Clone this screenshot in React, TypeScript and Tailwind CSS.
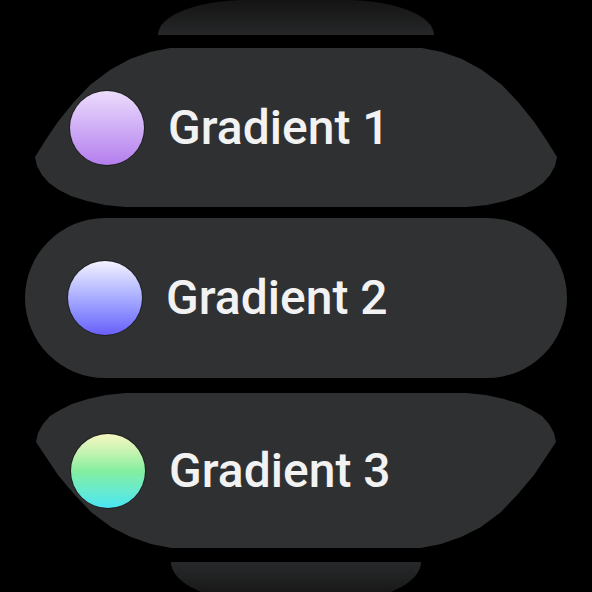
import React from "react";

function Dot({ grad }: { grad: string }) {
  return (
    <div
      className={`h-[74px] w-[74px] shrink-0 rounded-full ring-1 ring-black/40 ${grad}`}
    />
  );
}

function Label({ text }: { text: string }) {
  return (
    <span className="ml-[24px] font-['Roboto',sans-serif] text-[48px] font-medium leading-none text-[#f2f2f2]">
      {text}
    </span>
  );
}

export default function App() {
  return (
    <div className="flex h-[592px] w-[592px] flex-col items-center overflow-hidden bg-black">
      {/* top sliver */}
      <div className="h-[35px] w-[276px] shrink-0 rounded-tl-[100px_40px] rounded-tr-[100px_40px] bg-gradient-to-b from-[#141414] to-[#262728]" />

      {/* item 1 */}
      <div className="mt-[13px] flex h-[159px] w-[522px] shrink-0 items-center bg-[#2f3031] pl-[35px] [clip-path:polygon(135px_0,387px_0,407px_4px,427px_11px,447px_22px,467px_37px,484px_55px,500px_75px,512px_93px,522px_109px,520px_118px,515px_127px,508px_135px,498px_142px,486px_148px,470px_153px,452px_157px,432px_159px,90px_159px,70px_157px,52px_153px,36px_148px,24px_142px,14px_135px,7px_127px,2px_118px,0_109px,10px_93px,22px_75px,38px_55px,55px_37px,75px_22px,95px_11px,115px_4px)]">
        <Dot grad="bg-gradient-to-b from-[#ecdcfc] to-[#b47ded]" />
        <Label text="Gradient 1" />
      </div>

      {/* item 2 */}
      <div className="mt-[11px] flex h-[160px] w-[542px] shrink-0 items-center rounded-full bg-[#303132] pl-[43px]">
        <Dot grad="bg-gradient-to-b from-[#f4f2ff] to-[#6a5dfa]" />
        <Label text="Gradient 2" />
      </div>

      {/* item 3 */}
      <div className="mt-[15px] flex h-[155px] w-[520px] shrink-0 items-center bg-[#2f3031] pl-[35px] [clip-path:polygon(90px_0,430px_0,450px_2px,468px_6px,484px_11px,496px_17px,506px_23px,513px_31px,518px_40px,520px_49px,510px_64px,498px_82px,482px_101px,465px_119px,445px_134px,425px_144px,405px_151px,385px_155px,135px_155px,115px_151px,95px_144px,75px_134px,55px_119px,38px_101px,22px_82px,10px_64px,0_49px,2px_40px,7px_31px,14px_23px,24px_17px,36px_11px,52px_6px,70px_2px)]">
        <Dot grad="bg-gradient-to-b from-[#f6f7c0] via-[#84eea0] to-[#48e6f2]" />
        <Label text="Gradient 3" />
      </div>

      {/* bottom sliver */}
      <div className="mt-[14px] h-[40px] w-[250px] shrink-0 rounded-bl-[90px_40px] rounded-br-[90px_40px] bg-gradient-to-b from-[#28292a] to-[#141414]" />
    </div>
  );
}
